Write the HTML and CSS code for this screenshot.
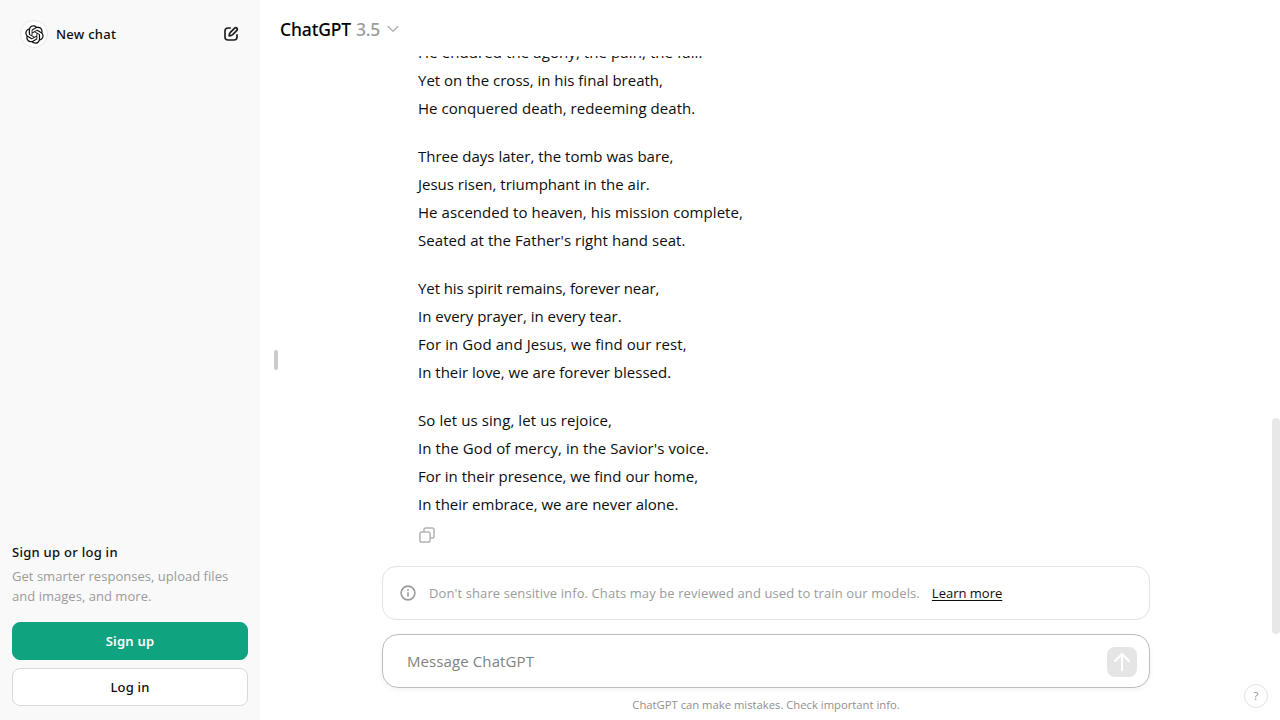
FILE: index.html
```
<!DOCTYPE html>
<html lang="en">
<head>
<meta charset="utf-8">
<title>ChatGPT</title>
<link rel="stylesheet" href="styles.css">
</head>
<body>
<div class="app">
  <aside class="sidebar">
    <div class="new-chat">
      <span class="logo"><svg width="19" height="19" viewBox="0 0 41 41" fill="currentColor"><path d="M37.532 16.8707C37.9808 15.5241 38.1363 14.0974 37.9886 12.6859C37.8409 11.2744 37.3934 9.91076 36.676 8.68622C35.6126 6.83404 33.9882 5.3676 32.0373 4.4985C30.0864 3.62941 27.9098 3.40259 25.8215 3.85078C24.8796 2.7893 23.7219 1.94125 22.4257 1.36341C21.1295 0.785575 19.7249 0.491269 18.3058 0.500197C16.1708 0.495044 14.0893 1.16803 12.3614 2.42214C10.6335 3.67624 9.34853 5.44666 8.6917 7.47815C7.30085 7.76286 5.98686 8.3414 4.8377 9.17505C3.68854 10.0087 2.73073 11.0782 2.02839 12.312C0.956464 14.1591 0.498905 16.2988 0.721698 18.4228C0.944492 20.5467 1.83612 22.5449 3.268 24.1293C2.81966 25.4759 2.66413 26.9026 2.81182 28.3141C2.95951 29.7256 3.40701 31.0892 4.12437 32.3138C5.18791 34.1659 6.8123 35.6322 8.76321 36.5013C10.7141 37.3704 12.8907 37.5973 14.9789 37.1492C15.9208 38.2107 17.0786 39.0587 18.3747 39.6366C19.6709 40.2144 21.0755 40.5087 22.4946 40.4998C24.6307 40.5054 26.7133 39.8321 28.4418 38.5772C30.1704 37.3223 31.4556 35.5506 32.1119 33.5179C33.5027 33.2332 34.8167 32.6547 35.9659 31.821C37.115 30.9874 38.0728 29.9178 38.7752 28.684C39.8458 26.8371 40.3023 24.6979 40.0789 22.5748C39.8556 20.4517 38.9639 18.4544 37.532 16.8707ZM22.4978 37.8849C20.7443 37.8874 19.0459 37.2733 17.6994 36.1501C17.7601 36.117 17.8666 36.0586 17.936 36.0161L25.9004 31.4156C26.1003 31.3019 26.2663 31.137 26.3813 30.9378C26.4964 30.7386 26.5563 30.5124 26.5549 30.2825V19.0542L29.9213 20.998C29.9389 21.0068 29.9541 21.0198 29.9656 21.0359C29.977 21.052 29.9842 21.0707 29.9867 21.0902V30.3889C29.9842 32.375 29.1946 34.2791 27.7909 35.6841C26.3872 37.0892 24.4838 37.8806 22.4978 37.8849ZM6.39227 31.0064C5.51397 29.4888 5.19742 27.7107 5.49804 25.9832C5.55718 26.0187 5.66048 26.0818 5.73461 26.1244L13.699 30.7248C13.8975 30.8408 14.1233 30.902 14.3532 30.902C14.583 30.902 14.8088 30.8408 15.0073 30.7248L24.731 25.1103V28.9979C24.7321 29.0177 24.7283 29.0376 24.7199 29.0556C24.7115 29.0736 24.6988 29.0893 24.6829 29.1012L16.6317 33.7497C14.9096 34.7416 12.8643 35.0097 10.9447 34.4954C9.02506 33.9811 7.38785 32.7263 6.39227 31.0064ZM4.29707 13.6194C5.17156 12.0998 6.55279 10.9364 8.19885 10.3327C8.19885 10.4013 8.19491 10.5228 8.19491 10.6071V19.808C8.19351 20.0378 8.25334 20.2638 8.36823 20.4629C8.48312 20.6619 8.64893 20.8267 8.84863 20.9404L18.5723 26.5542L15.206 28.4979C15.1894 28.5089 15.1703 28.5155 15.1505 28.5173C15.1307 28.5191 15.1107 28.516 15.0924 28.5082L7.04046 23.8557C5.32135 22.8601 4.06716 21.2235 3.55289 19.3046C3.03862 17.3858 3.30624 15.3413 4.29707 13.6194ZM31.955 20.0556L22.2312 14.4411L25.5976 12.4981C25.6142 12.4872 25.6333 12.4805 25.6531 12.4787C25.6729 12.4769 25.6928 12.4801 25.7111 12.4879L33.7631 17.1364C34.9967 17.849 36.0017 18.8982 36.6606 20.1613C37.3194 21.4244 37.6047 22.849 37.4832 24.2684C37.3617 25.6878 36.8382 27.0432 35.9743 28.1759C35.1103 29.3086 33.9415 30.1717 32.6047 30.6641C32.6047 30.5947 32.6047 30.4733 32.6047 30.3889V21.188C32.6066 20.9586 32.5474 20.7328 32.4332 20.5338C32.319 20.3348 32.154 20.1698 31.955 20.0556ZM35.3055 15.0128C35.2464 14.9765 35.1431 14.9142 35.069 14.8717L27.1045 10.2712C26.906 10.1554 26.6803 10.0943 26.4504 10.0943C26.2206 10.0943 25.9948 10.1554 25.7963 10.2712L16.0726 15.8858V11.9982C16.0715 11.9783 16.0753 11.9585 16.0837 11.9405C16.0921 11.9225 16.1048 11.9068 16.1207 11.8949L24.1719 7.25025C25.4053 6.53903 26.8158 6.19376 28.2383 6.25482C29.6608 6.31589 31.0364 6.78077 32.2044 7.59508C33.3723 8.40939 34.2842 9.53945 34.8334 10.8531C35.3826 12.1667 35.5464 13.6095 35.3055 15.0128ZM14.2424 21.9419L10.8752 19.9981C10.8576 19.9893 10.8423 19.9763 10.8309 19.9602C10.8195 19.9441 10.8122 19.9254 10.8098 19.9058V10.6071C10.8107 9.18295 11.2173 7.78848 11.9819 6.58696C12.7466 5.38544 13.8377 4.42659 15.1275 3.82264C16.4173 3.21869 17.8524 2.99464 19.2649 3.1767C20.6775 3.35876 22.0089 3.93941 23.1034 4.85067C23.0427 4.88379 22.937 4.94215 22.8668 4.98473L14.9024 9.58517C14.7025 9.69878 14.5366 9.86356 14.4215 10.0626C14.3065 10.2616 14.2466 10.4877 14.2479 10.7175L14.2424 21.9419ZM16.071 17.9991L20.4018 15.4978L24.7325 17.9975V22.9985L20.4018 25.4983L16.071 22.9985V17.9991Z"/></svg></span>
      <span class="new-chat-label">New chat</span>
      <svg class="compose" width="18" height="18" viewBox="0 0 24 24" fill="none" stroke="currentColor" stroke-width="2.2" stroke-linecap="round" stroke-linejoin="round"><path d="M11 4H8a4 4 0 0 0-4 4v8a4 4 0 0 0 4 4h8a4 4 0 0 0 4-4v-3"/><path d="M9.500 14.500c0-2.200.5-3.500 1.700-4.700l5.600-5.600a2.150 2.150 0 0 1 3.050 3.050l-5.600 5.600C13 14 11.700 14.500 9.500 14.500z"/></svg>
    </div>
    <div class="auth">
      <div class="auth-title">Sign up or log in</div>
      <div class="auth-text">Get smarter responses, upload files<br>and images, and more.</div>
      <button class="btn btn-primary">Sign up</button>
      <button class="btn btn-plain">Log in</button>
    </div>
  </aside>
  <main class="main">
    <header class="header">
      <span class="model">ChatGPT</span><span class="version">3.5</span>
      <svg class="chevron" width="12" height="8" viewBox="0 0 12 8" fill="none" stroke="currentColor" stroke-width="1.5" stroke-linecap="round" stroke-linejoin="round"><path d="M1.200 1.500 6 6.300l4.800-4.800"/></svg>
    </header>
    <section class="thread">
      <div class="poem">
        <p><span class="looser">He endured the agony, the pain, the fall.</span><span>Yet on the cross, in his final breath,</span><span class="loose">He conquered death, redeeming death.</span></p>
        <p><span>Three days later, the tomb was bare,</span><span>Jesus risen, triumphant in the air.</span><span class="loose">He ascended to heaven, his mission complete,</span><span class="loose">Seated at the Father's right hand seat.</span></p>
        <p><span class="tight">Yet his spirit remains, forever near,</span><span>In every prayer, in every tear.</span><span class="looser">For in God and Jesus, we find our rest,</span><span>In their love, we are forever blessed.</span></p>
        <p><span class="looser">So let us sing, let us rejoice,</span><span class="looser">In the God of mercy, in the Savior's voice.</span><span>For in their presence, we find our home,</span><span>In their embrace, we are never alone.</span></p>
      </div>
      <svg class="copy" width="18" height="18" viewBox="0 0 18 18" fill="none" stroke="currentColor" stroke-width="1.500" stroke-linejoin="round"><rect x="1.900" y="6.100" width="10.200" height="10" rx="1.800"/><path d="M6 6V3.800A1.800 1.800 0 0 1 7.800 2h6.400A1.800 1.800 0 0 1 16 3.800v6.400a1.800 1.800 0 0 1-1.800 1.800H12"/></svg>
    </section>
    <footer class="composer">
      <div class="notice">
        <svg class="info" width="16" height="16" viewBox="0 0 16 16" fill="none" stroke="currentColor" stroke-width="1.600"><circle cx="8" cy="8" r="6.900"/><path d="M8 7.200v4.300M8 4.300v1.700"/></svg>
        <span class="notice-text">Don't share sensitive info. Chats may be reviewed and used to train our models.</span>
        <a class="learn">Learn more</a>
      </div>
      <div class="prompt">
        <span class="placeholder">Message ChatGPT</span>
        <span class="send"><svg width="18" height="20" viewBox="0 0 18 20" fill="none" stroke="currentColor" stroke-width="2" stroke-linecap="round" stroke-linejoin="round"><path d="M9 18.300V2.200M2 9l7-7 7 7"/></svg></span>
      </div>
      <div class="disclaimer">ChatGPT can make mistakes. Check important info.</div>
    </footer>
    <span class="handle"></span>
    <span class="scroll-thumb"></span>
    <span class="help">?</span>
  </main>
</div>
</body>
</html>
```
FILE: styles.css
```
* { box-sizing: border-box; }

body {
  margin: 0;
  font-family: "Open Sans", "Noto Sans", sans-serif;
  color: #0d0d0d;
  background: #fff;
}

.app { display: flex; width: 100%; height: 720px; overflow: hidden; }

.sidebar {
  display: flex;
  flex-direction: column;
  justify-content: space-between;
  width: 260px;
  padding: 14px 12px;
  background: #f9f9f9;
}

.new-chat { display: flex; align-items: center; height: 40px; padding: 0 8px; }

.logo {
  display: flex;
  align-items: center;
  justify-content: center;
  width: 28px;
  height: 28px;
  border: 1px solid #e8e8e8;
  border-radius: 50%;
  background: #fff;
}

.new-chat-label {
  flex: 1;
  margin-left: 8px;
  font: 500 13px/20px "Noto Sans", sans-serif;
  letter-spacing: 0.25px;
}

.compose { color: #1c1c1c; }

.auth { display: flex; flex-direction: column; }

.auth-title {
  margin-bottom: 4px;
  font: 500 13px/20px "Noto Sans", sans-serif;
  letter-spacing: 0.27px;
}

.auth-text {
  margin-bottom: 16px;
  font-size: 13px;
  line-height: 20px;
  letter-spacing: 0.03px;
  color: #9b9b9b;
}

.btn {
  height: 38px;
  padding: 0;
  border: 1px solid #d9d9d9;
  border-radius: 8px;
  background: #fff;
  color: #0d0d0d;
  font: 500 13px/20px "Noto Sans", sans-serif;
  letter-spacing: 0.2px;
}

.btn-primary {
  margin-bottom: 8px;
  border-color: #10a37f;
  background: #10a37f;
  color: #fff;
  font-weight: 600;
}

.main {
  position: relative;
  display: flex;
  flex: 1;
  flex-direction: column;
}

.header {
  display: flex;
  flex: none;
  align-items: center;
  height: 56px;
  padding: 2px 20px 0;
  font: 500 17.5px/28px "Noto Sans", sans-serif;
}

.model { letter-spacing: -0.15px; color: #000; }
.version { margin-left: 5px; letter-spacing: -0.2px; color: #9b9b9b; }
.chevron { margin-left: 7px; color: #b4b4b4; }

.thread {
  display: flex;
  flex: 1;
  flex-direction: column;
  justify-content: flex-end;
  min-height: 0;
  padding: 0 0 22px 158px;
  overflow: hidden;
}

.poem {
  display: flex;
  flex-direction: column;
  gap: 20px;
  margin-bottom: 8px;
  font-size: 15px;
  line-height: 28px;
}

.poem p { display: flex; flex-direction: column; margin: 0; }
.poem .loose { letter-spacing: 0.055px; }
.poem .looser { letter-spacing: 0.09px; }
.poem .tight { letter-spacing: -0.09px; }

.copy { flex: none; color: #b4b4b4; }

.composer {
  display: flex;
  flex: none;
  flex-direction: column;
  width: 768px;
  margin-left: 122px;
}

.notice {
  display: flex;
  align-items: center;
  height: 54px;
  margin-bottom: 14px;
  padding: 0 17px;
  border: 1px solid #e3e3e3;
  border-radius: 14px;
  font-size: 13px;
  line-height: 20px;
}

.info { flex: none; color: #9b9b9b; }
.notice-text { margin-left: 13px; letter-spacing: 0.1px; color: #9b9b9b; white-space: nowrap; }
.learn { margin-left: 12px; text-decoration: underline; text-underline-offset: 2px; }

.prompt {
  display: flex;
  align-items: center;
  justify-content: space-between;
  height: 54px;
  padding: 0 12px 0 24px;
  border: 1px solid #bcbcbc;
  border-radius: 16px;
  box-shadow: 0 2px 6px rgba(0, 0, 0, 0.05);
}

.placeholder { font-size: 15px; letter-spacing: 0.1px; color: #828282; }

.send {
  display: flex;
  align-items: center;
  justify-content: center;
  width: 30px;
  height: 30px;
  margin-top: 1px;
  border-radius: 8px;
  background: #e5e5e5;
  color: #fff;
}

.disclaimer {
  height: 32px;
  padding-top: 9px;
  font-size: 11.25px;
  line-height: 16px;
  text-align: center;
  color: #8f8f8f;
}

.handle {
  position: absolute;
  top: 350px;
  left: 14px;
  width: 4px;
  height: 20px;
  border-radius: 2px;
  background: #cbcbcb;
}

.scroll-thumb {
  position: absolute;
  top: 418px;
  right: 0;
  width: 8px;
  height: 216px;
  border-radius: 4px;
  background: #e8e8e8;
}

.help {
  position: absolute;
  right: 12px;
  bottom: 12px;
  width: 24px;
  height: 24px;
  border: 1px solid #e3e3e3;
  border-radius: 50%;
  font-size: 11.25px;
  line-height: 22px;
  text-align: center;
  color: #8f8f8f;
}
```
